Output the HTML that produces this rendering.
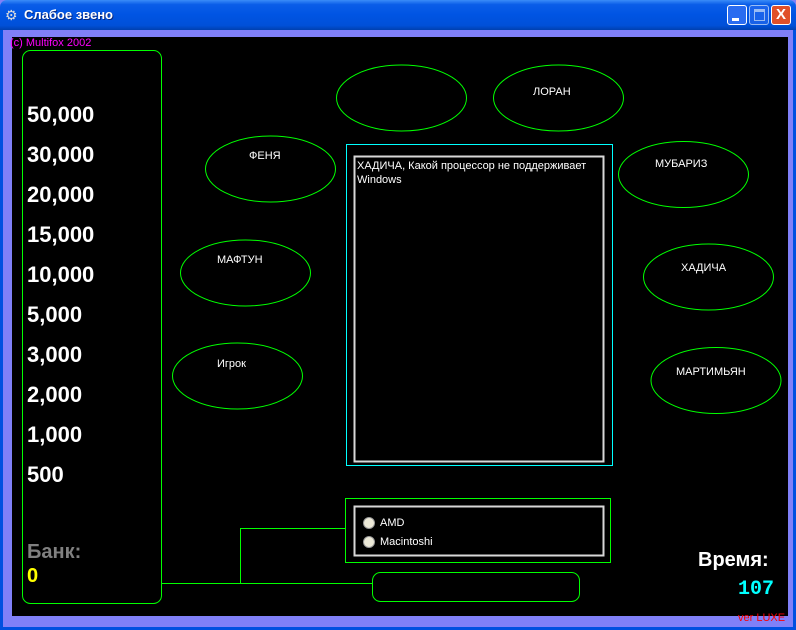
<!DOCTYPE html>
<html><head><meta charset="utf-8"><style>
*{margin:0;padding:0;box-sizing:border-box}
body{width:796px;height:630px;overflow:hidden;background:#8080f8;font-family:"Liberation Sans",sans-serif;position:relative}
.t{position:absolute;white-space:nowrap}
</style></head><body>
<div style="position:absolute;left:0;top:0;width:796px;height:30px;background:linear-gradient(#3a8cf8 0%,#0a5de8 15%,#0054e3 50%,#0050d8 85%,#0040b0 100%);border-radius:7px 7px 0 0"></div>
<div style="position:absolute;left:0;top:30px;width:3px;height:600px;background:#0050e0"></div>
<div style="position:absolute;right:0;top:30px;width:3px;height:600px;background:#0050e0"></div>
<div style="position:absolute;left:0;bottom:0;width:796px;height:3px;background:#0050e0"></div>
<div class="t" style="left:5px;top:7px;color:#ddd;font-size:14px">⚙</div>
<div class="t" style="left:24px;top:7px;color:#fff;font-size:13px;font-weight:bold;text-shadow:1px 1px #0a2a80">Слабое звено</div>
<div style="position:absolute;left:727px;top:5px;width:20px;height:20px;border:1px solid #fff;border-radius:3px;background:#2a6cf0"><div style="position:absolute;left:4px;top:12px;width:7px;height:3px;background:#fff"></div></div>
<div style="position:absolute;left:749px;top:5px;width:20px;height:20px;border:1px solid #fff;border-radius:3px;background:#2a6cf0;opacity:.6"><div style="position:absolute;left:4px;top:3px;width:11px;height:12px;border:1px solid #fff;border-top-width:3px"></div></div>
<div style="position:absolute;left:771px;top:5px;width:20px;height:20px;border:1px solid #fff;border-radius:3px;background:#e0502a;color:#fff;font-size:15px;font-weight:bold;text-align:center;line-height:18px">X</div>
<div style="position:absolute;left:12px;top:37px;width:776px;height:579px;background:#000"></div>
<svg style="position:absolute;left:0;top:0" width="796" height="630">
<g fill="none" stroke="#00ff00" stroke-width="1">
<rect x="22.5" y="50.5" width="139" height="553" rx="8"/>
<ellipse cx="401.5" cy="98" rx="65" ry="33"/>
<ellipse cx="558.5" cy="98" rx="65" ry="33"/>
<ellipse cx="270.5" cy="169" rx="65" ry="33"/>
<ellipse cx="683.5" cy="174.5" rx="65" ry="33"/>
<ellipse cx="245.5" cy="273" rx="65" ry="33"/>
<ellipse cx="708.5" cy="277" rx="65" ry="33"/>
<ellipse cx="237.5" cy="376" rx="65" ry="33"/>
<ellipse cx="716" cy="380.5" rx="65" ry="33"/>
<path d="M161 583.5H372M240.5 583V528.5H346"/>
<rect x="345.5" y="498.5" width="265" height="64"/>
<rect x="372.5" y="572.5" width="207" height="29" rx="8"/>
</g>
<rect x="346.5" y="144.5" width="266" height="321" fill="none" stroke="#00ffff"/>
<rect x="354.5" y="156.5" width="249" height="305" fill="none" stroke="#d8d8d8" stroke-width="2"/>
<rect x="354.5" y="506.5" width="249" height="49" fill="none" stroke="#d8d8d8" stroke-width="2"/>
<circle cx="369" cy="523" r="5.5" fill="#ece9d8" stroke="#999"/>
<circle cx="369" cy="542" r="5.5" fill="#ece9d8" stroke="#999"/>
</svg>
<div class="t" style="left:10px;top:37px;color:#ff00ff;font-size:11px">(c) Multifox 2002</div>
<div style="position:absolute;left:27px;top:95px;color:#fff;font-weight:bold;font-size:22px;line-height:40px">50,000<br>30,000<br>20,000<br>15,000<br>10,000<br>5,000<br>3,000<br>2,000<br>1,000<br>500</div>
<div class="t" style="left:27px;top:541px;color:#808080;font-weight:bold;font-size:20px">Банк:</div>
<div class="t" style="left:27px;top:565px;color:#ffff00;font-weight:bold;font-size:20px">0</div>
<div class="t" style="left:533px;top:86px;color:#fff;font-size:11px">ЛОРАН</div>
<div class="t" style="left:249px;top:150px;color:#fff;font-size:11px">ФЕНЯ</div>
<div class="t" style="left:655px;top:158px;color:#fff;font-size:11px">МУБАРИЗ</div>
<div class="t" style="left:217px;top:254px;color:#fff;font-size:11px">МАФТУН</div>
<div class="t" style="left:681px;top:262px;color:#fff;font-size:11px">ХАДИЧА</div>
<div class="t" style="left:217px;top:358px;color:#fff;font-size:11px">Игрок</div>
<div class="t" style="left:676px;top:366px;color:#fff;font-size:11px">МАРТИМЬЯН</div>
<div class="t" style="left:357px;top:159px;color:#fff;font-size:11px;line-height:14px">ХАДИЧА, Какой процессор не поддерживает<br>Windows</div>
<div class="t" style="left:380px;top:517px;color:#fff;font-size:11px">AMD</div>
<div class="t" style="left:380px;top:536px;color:#fff;font-size:11px">Macintoshi</div>
<div class="t" style="left:698px;top:549px;color:#fff;font-weight:bold;font-size:20px">Время:</div>
<div class="t" style="left:738px;top:578px;color:#00ffff;font-weight:bold;font-size:20px;font-family:'Liberation Mono',monospace">107</div>
<div class="t" style="left:738px;top:612px;color:#ff0000;font-size:11px">ver LUXE</div>
</body></html>
